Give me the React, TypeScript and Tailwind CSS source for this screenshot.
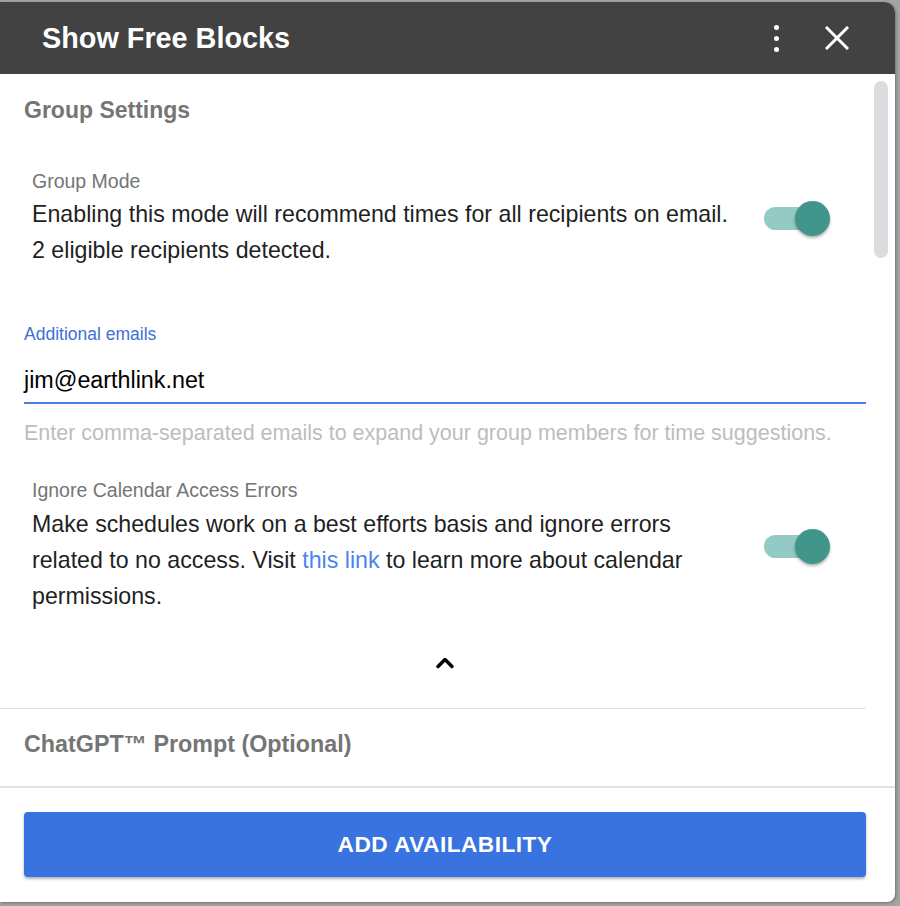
import { ChevronUp } from 'lucide-react'

function Toggle() {
  return (
    <div className="relative w-[66px] h-[36px] shrink-0">
      <div className="absolute left-0 top-[6px] w-[58px] h-[23px] rounded-full bg-[#93cac3]" />
      <div className="absolute right-0 top-0 w-[35px] h-[35px] rounded-full bg-[#41958a] shadow-[0_2px_3px_rgba(0,0,0,0.3)]" />
    </div>
  )
}

export default function App() {
  return (
    <div
      className="w-[900px] h-[906px] bg-[#a4a4a4] pt-[2px]"
      style={{ fontFamily: '"Liberation Sans", Arial, sans-serif' }}
    >
      <div className="w-[895px] h-[900px] bg-white rounded-tr-[10px] rounded-br-[8px] overflow-hidden flex flex-col shadow-[1px_1px_3px_rgba(0,0,0,0.3)]">
        {/* Header */}
        <div className="h-[72px] shrink-0 bg-[#424242] flex items-center pl-[42px] pr-[46px]">
          <h1 className="text-white text-[28.8px] font-bold leading-none flex-1">Show Free Blocks</h1>
          <div className="flex flex-col items-center gap-[6px] mr-[46px]">
            <span className="block w-[5px] h-[5px] rounded-full bg-white" />
            <span className="block w-[5px] h-[5px] rounded-full bg-white" />
            <span className="block w-[5px] h-[5px] rounded-full bg-white" />
          </div>
          <svg width="24" height="24" viewBox="0 0 24 24" className="text-white">
            <path d="M2 2 L22 22 M22 2 L2 22" stroke="currentColor" strokeWidth="3" strokeLinecap="square" />
          </svg>
        </div>

        {/* Body */}
        <div className="h-[712px] shrink-0 flex">
          <div className="w-[866px] flex flex-col">
            <div className="pl-[24px]">
              <h2 className="pt-[23px] text-[23px] leading-[26px] font-bold text-[#757575]">Group Settings</h2>

              <div className="mt-[47px] pl-[8px] flex items-center">
                <div className="w-[712px]">
                  <div className="text-[19.5px] leading-[22px] text-[#757575]">Group Mode</div>
                  <p className="mt-[4px] text-[23.2px] leading-[36px] text-[#1f1f1f]">
                    Enabling this mode will recommend times for all recipients on email.
                    <br />
                    2 eligible recipients detected.
                  </p>
                </div>
                <div className="ml-[20px]">
                  <Toggle />
                </div>
              </div>

              <div className="mt-[56px] text-[17.5px] leading-[20px] text-[#3d6fd6]">Additional emails</div>
              <div className="mt-[24px] pb-[10px] border-b-2 border-[#4a80e8] text-[23.3px] leading-[24px] text-black">
                jim@earthlink.net
              </div>
              <div className="mt-[18px] text-[21.5px] leading-[22px] text-[#bdbdbd] whitespace-nowrap">
                Enter comma-separated emails to expand your group members for time suggestions.
              </div>

              <div className="mt-[35px] pl-[8px] flex items-center">
                <div className="w-[712px]">
                  <div className="text-[19.5px] leading-[22px] text-[#757575]">Ignore Calendar Access Errors</div>
                  <p className="mt-[5px] text-[23.2px] leading-[36px] text-[#1f1f1f]">
                    Make schedules work on a best efforts basis and ignore errors
                    <br />
                    related to no access. Visit <span className="text-[#4a86e8]">this link</span> to learn more about calendar
                    <br />
                    permissions.
                  </p>
                </div>
                <div className="ml-[20px]">
                  <Toggle />
                </div>
              </div>

              <div className="mt-[37px] h-[24px] flex justify-center">
                <ChevronUp className="w-[28px] h-[28px] -mt-[2px] text-black" strokeWidth={3} />
              </div>
            </div>

            <div className="mt-[33px] border-t border-[#e0e0e0]" />
            <h2 className="pl-[24px] mt-[22px] text-[23.3px] leading-[26px] font-bold text-[#757575]">
              ChatGPT™ Prompt (Optional)
            </h2>
          </div>

          {/* Scrollbar */}
          <div className="flex-1 pl-[8px] pt-[7px]">
            <div className="w-[14px] h-[177px] rounded-full bg-[#dadce0]" />
          </div>
        </div>

        {/* Footer */}
        <div className="flex-1 border-t-2 border-[#e2e2e2] px-[24px] pt-[24px] pr-[29px]">
          <button className="w-full h-[65px] rounded-[4px] bg-[#3873e0] text-white text-[22.7px] font-bold tracking-[0.02em] shadow-[0_2px_3px_rgba(0,0,0,0.3)]">
            ADD AVAILABILITY
          </button>
        </div>
      </div>
    </div>
  )
}
